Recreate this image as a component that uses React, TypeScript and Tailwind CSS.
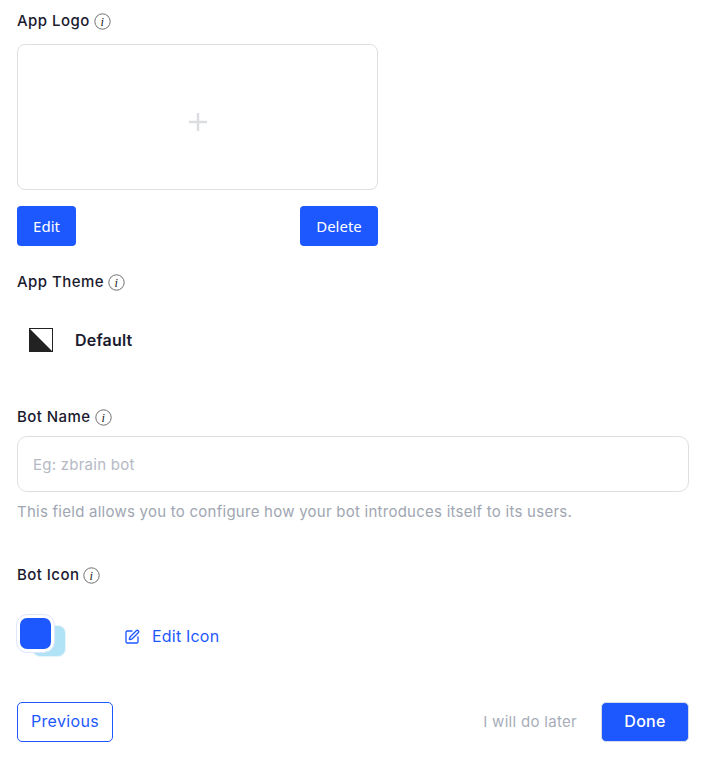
import { SquarePen } from "lucide-react";

function Info() {
  return (
    <svg width="17" height="17" viewBox="0 0 17 17" className="shrink-0">
      <circle cx="8.5" cy="8.5" r="7.7" fill="none" stroke="#6f6f6f" strokeWidth="1" />
      <text x="8.5" y="12.6" textAnchor="middle" fontSize="12.5" fontStyle="italic" fontFamily="'Liberation Serif', serif" fill="#222">i</text>
    </svg>
  );
}

function Label({ text, className }: { text: string; className: string }) {
  return (
    <div className={`flex items-center gap-[4px] h-5 text-[15px] font-medium text-[#1a1a2e] tracking-[0.45px] ${className}`}>
      <span>{text}</span>
      <Info />
    </div>
  );
}

export default function App() {
  return (
    <div className="w-[703px] h-[761px] bg-white pl-[17px] pr-[14px] overflow-hidden font-['Inter',sans-serif]">
      <Label text="App Logo" className="mt-[11px]" />
      <div className="mt-[13px] w-[361px] h-[146px] pt-[10px] rounded-lg border border-[#dedfe3] flex items-center justify-center">
        <svg width="20" height="20" viewBox="0 0 20 20">
          <path d="M10 1v18M1 10h18" stroke="#dcdde0" strokeWidth="2.4" />
        </svg>
      </div>
      <div className="mt-4 w-[361px] flex justify-between font-['Noto_Sans',sans-serif] text-[15px] text-white">
        <button className="w-[59px] h-10 rounded bg-[#1d58ff]">Edit</button>
        <button className="w-[78px] h-10 rounded bg-[#1d58ff]">Delete</button>
      </div>
      <Label text="App Theme" className="mt-[26px]" />
      <div className="mt-[36px] h-6 flex items-center">
        <svg width="24" height="24" viewBox="0 0 24 24" className="ml-3">
          <rect x="0.5" y="0.5" width="23" height="23" fill="#fff" stroke="#222" />
          <path d="M0 0L24 24H0Z" fill="#222" />
        </svg>
        <span className="ml-[22px] text-[16px] tracking-[0.2px] font-semibold text-[#1a1a2e]">Default</span>
      </div>
      <Label text="Bot Name" className="mt-[55px]" />
      <div className="mt-[9px] h-14 w-[672px] rounded-[10px] border border-[#dedfe3] flex items-center pl-[15px] pt-[2px] text-[15px] tracking-[0.25px] text-[#b4b9c4]">
        Eg: zbrain bot
      </div>
      <p className="mt-[10px] h-5 leading-5 text-[15px] tracking-[0.25px] text-[#a0a6b2]">
        This field allows you to configure how your bot introduces itself to its users.
      </p>
      <Label text="Bot Icon" className="mt-[43px]" />
      <div className="mt-[30px] h-[44px] flex items-center">
        <div className="relative w-[50px] h-[44px] shrink-0">
          <div className="absolute left-[15px] top-[10px] w-[34px] h-[32px] rounded-[8px] bg-[#b0e3f6] border border-[#e6f6fc]" />
          <div className="absolute left-0 top-0 w-[37px] h-[37px] rounded-[10px] bg-[#1d58ff] border-[3px] border-white outline outline-1 outline-[#dfe7ff]" />
        </div>
        <div className="ml-[57px] flex items-center gap-[12px] text-[#1d58ff] text-[16px] tracking-[0.2px]">
          <SquarePen size={16} strokeWidth={2} />
          <span className="-translate-y-px">Edit Icon</span>
        </div>
      </div>
      <div className="mt-[43px] flex items-center justify-between">
        <button className="w-[96px] h-10 pb-[2px] rounded-[5px] border border-[#1d58ff] bg-white text-[#1d58ff] text-[16px] tracking-[0.35px]">Previous</button>
        <div className="flex items-center">
          <span className="text-[#a7adb9] text-[15px] tracking-[0.3px]">I will do later</span>
          <button className="ml-[24px] w-[88px] h-10 pb-[2px] rounded-[5px] bg-[#1d58ff] border border-[#d5dbe8] text-white text-[16px] tracking-[0.3px] font-medium">Done</button>
        </div>
      </div>
    </div>
  );
}
